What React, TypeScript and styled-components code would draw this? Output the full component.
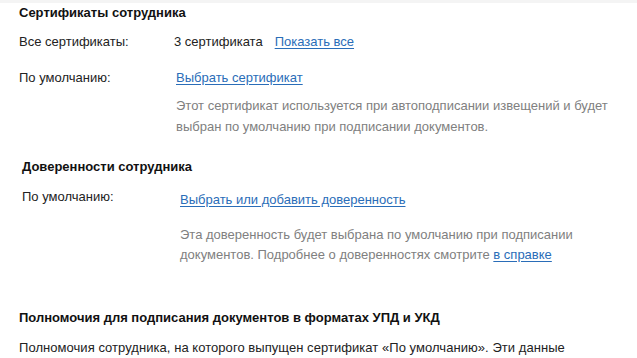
import React from "react"
import styled, { createGlobalStyle } from "styled-components"

const GlobalStyle = createGlobalStyle`
  html, body {
    margin: 0;
    padding: 0;
    background: #fff;
  }
  body {
    font-family: "Liberation Sans", Arial, sans-serif;
    font-size: 13px;
    color: #222;
  }
`

const Page = styled.div`
  width: 637px;
  height: 358px;
  overflow: hidden;
  border-top: 3px solid #f4f4f4;
  box-sizing: border-box;
`

const Section = styled.section<{ $indent?: number }>`
  padding-left: ${p => 19 + (p.$indent || 0)}px;
`

const Title = styled.h2<{ $top?: number }>`
  margin: ${p => p.$top || 0}px 0 0;
  font-size: 13px;
  font-weight: bold;
  line-height: 20px;
  color: #111;
`

const Row = styled.div<{ $label: number; $top: number }>`
  display: grid;
  grid-template-columns: ${p => p.$label}px 1fr;
  margin-top: ${p => p.$top}px;
  line-height: 20px;
`

const Label = styled.div`
  color: #222;
`

const Value = styled.div<{ $shift?: number }>`
  padding-top: ${p => p.$shift || 0}px;
`

const Count = styled.span`
  margin-right: 12px;
`

const Link = styled.a`
  color: #2a6db8;
  text-decoration: underline;
  text-underline-offset: 2px;
  cursor: pointer;
`

const Hint = styled.p<{ $top: number; $lh: number }>`
  margin: ${p => p.$top}px 0 0;
  color: #808080;
  font-size: 13px;
  line-height: ${p => p.$lh}px;
`

const Text = styled.p`
  margin: 10px 0 0;
  line-height: 20px;
  letter-spacing: 0.05px;
  white-space: nowrap;
`

export default function App() {
  return (
    <Page>
      <GlobalStyle />

      <Section>
        <Title>Сертификаты сотрудника</Title>
        <Row $label={155} $top={9}>
          <Label>Все сертификаты:</Label>
          <Value>
            <Count>3 сертификата</Count>
            <Link>Показать все</Link>
          </Value>
        </Row>
        <Row $label={157} $top={16}>
          <Label>По умолчанию:</Label>
          <Value>
            <Link>Выбрать сертификат</Link>
            <Hint $top={7} $lh={21}>
              Этот сертификат используется при автоподписании извещений и будет
              выбран по умолчанию при подписании документов.
            </Hint>
          </Value>
        </Row>
      </Section>

      <Section $indent={3}>
        <Title $top={20}>Доверенности сотрудника</Title>
        <Row $label={158} $top={10}>
          <Label>По умолчанию:</Label>
          <Value $shift={3}>
            <Link>Выбрать или добавить доверенность</Link>
            <Hint $top={15} $lh={20}>
              Эта доверенность будет выбрана по умолчанию при подписании
              документов. Подробнее о доверенностях смотрите <Link>в справке</Link>
            </Hint>
          </Value>
        </Row>
      </Section>

      <Section>
        <Title $top={43}>Полномочия для подписания документов в форматах УПД и УКД</Title>
        <Text>
          Полномочия сотрудника, на которого выпущен сертификат «По умолчанию». Эти данные
        </Text>
      </Section>
    </Page>
  )
}
